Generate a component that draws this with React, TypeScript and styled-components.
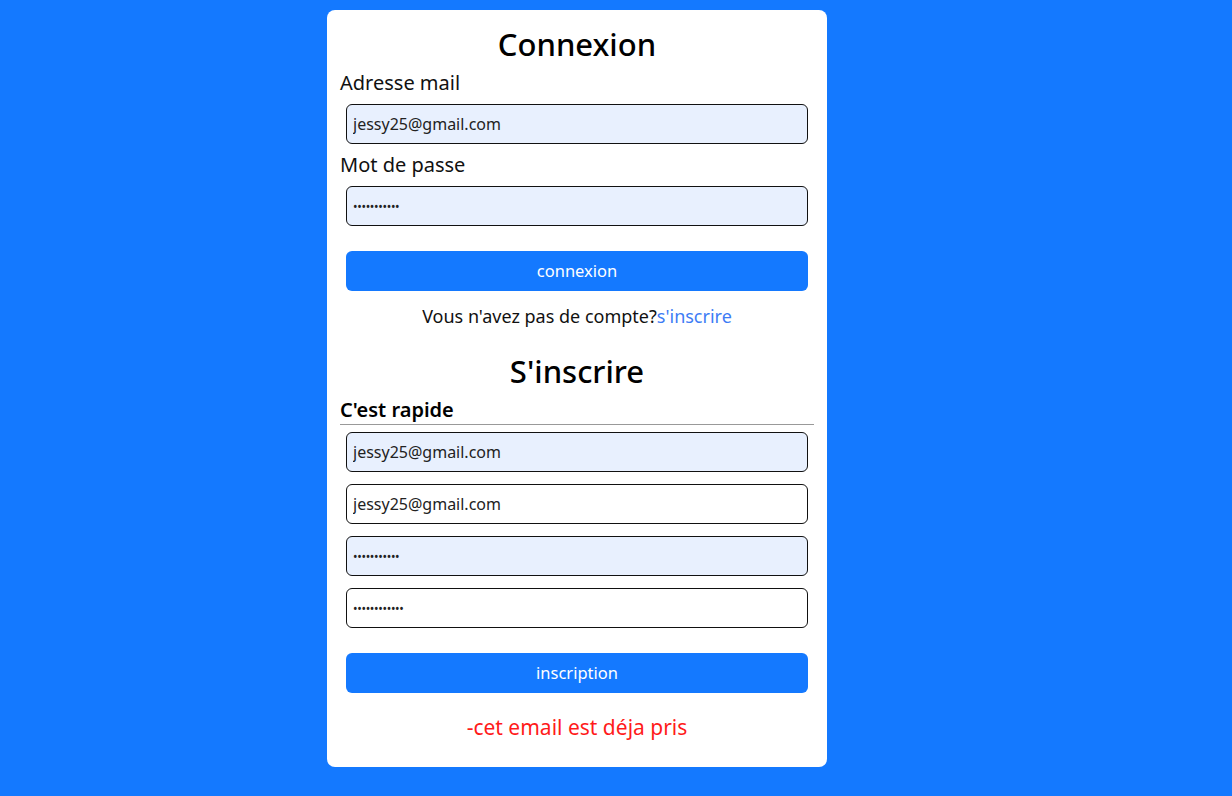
import { useEffect, useRef } from "react";
import styled, { createGlobalStyle } from "styled-components";

const GlobalStyle = createGlobalStyle`
  html, body {
    margin: 0;
    padding: 0;
    background-color: #1479ff;
    font-family: "Noto Sans", "Open Sans", sans-serif;
  }
`;

const Page = styled.div`
  min-height: 796px;
  padding: 10px 0 0 327px;
  box-sizing: border-box;
`;

const Card = styled.div`
  width: 500px;
  height: 757px;
  box-sizing: border-box;
  background-color: white;
  border-radius: 8px;
  padding: 12px 13px 0 13px;
  display: flex;
  flex-direction: column;
`;

const Title = styled.h1<{ $top?: number }>`
  margin: ${(props) => props.$top ?? 0}px 0 0;
  height: 44px;
  line-height: 44px;
  text-align: center;
  font-size: 31px;
  font-weight: 500;
  color: #000;
`;

const Label = styled.label`
  display: block;
  margin-top: 4px;
  font-size: 20px;
  font-weight: 400;
  height: 26px;
  line-height: 26px;
  color: #111;
`;

const Input = styled.input<{ $filled?: boolean }>`
  display: block;
  box-sizing: border-box;
  width: 462px;
  height: 40px;
  margin: 8px 6px 4px;
  padding: 0 6px;
  border: 1px solid #111;
  border-radius: 6px;
  background-color: ${(props) => (props.$filled ? "#e8f0fe" : "#fff")};
  font-family: inherit;
  font-size: 16px;
  color: #222;
  outline: none;

  &[type="password"] {
    font-size: 12px;
    letter-spacing: -0.3px;
  }
`;

const Fields = styled.div`
  display: flex;
  flex-direction: column;
  gap: 12px;
  padding: 7px 6px 0;

  ${Input} {
    margin: 0;
  }
`;

const Button = styled.button<{ $top: number }>`
  display: block;
  width: 462px;
  height: 40px;
  margin: ${(props) => props.$top}px 6px 0;
  padding: 0 0 2px;
  border: none;
  border-radius: 6px;
  background-color: #1479ff;
  color: white;
  font-family: inherit;
  font-size: 16.5px;
`;

const Switch = styled.p`
  margin: 13px 0 0;
  height: 24px;
  line-height: 24px;
  text-align: center;
  font-size: 18px;
  color: #111;

  a {
    color: #3d7cf5;
    text-decoration: none;
  }
`;

const Subtitle = styled.h2`
  margin: 4px 0 0;
  height: 27px;
  line-height: 26px;
  font-size: 20px;
  font-weight: 600;
  color: #000;
`;

const Divider = styled.hr`
  margin: 0;
  border: none;
  border-top: 1px solid #999;
`;

const Error = styled.p`
  margin: 20px 0 0;
  height: 28px;
  line-height: 28px;
  text-align: center;
  font-size: 21px;
  color: #ff1a1a;
`;

function App() {
  const lastRef = useRef<HTMLInputElement>(null);

  useEffect(() => {
    const el = lastRef.current;
    if (el) {
      el.focus();
      el.setSelectionRange(el.value.length, el.value.length);
    }
  }, []);

  return (
    <Page>
      <GlobalStyle />
      <Card>
        <Title>Connexion</Title>
        <Label>Adresse mail</Label>
        <Input $filled readOnly value="jessy25@gmail.com" />
        <Label>Mot de passe</Label>
        <Input $filled readOnly type="password" value="jessy25pass" />
        <Button $top={21}>connexion</Button>
        <Switch>
          Vous n'avez pas de compte?<a href="#">s'inscrire</a>
        </Switch>

        <Title $top={21}>S'inscrire</Title>
        <Subtitle>C'est rapide</Subtitle>
        <Divider />
        <Fields>
          <Input $filled readOnly value="jessy25@gmail.com" />
          <Input readOnly value="jessy25@gmail.com" />
          <Input $filled readOnly type="password" value="jessy25pass" />
          <Input ref={lastRef} readOnly type="password" value="jessy25passw" />
        </Fields>
        <Button $top={25}>inscription</Button>
        <Error>-cet email est déja pris</Error>
      </Card>
    </Page>
  );
}

export default App;
